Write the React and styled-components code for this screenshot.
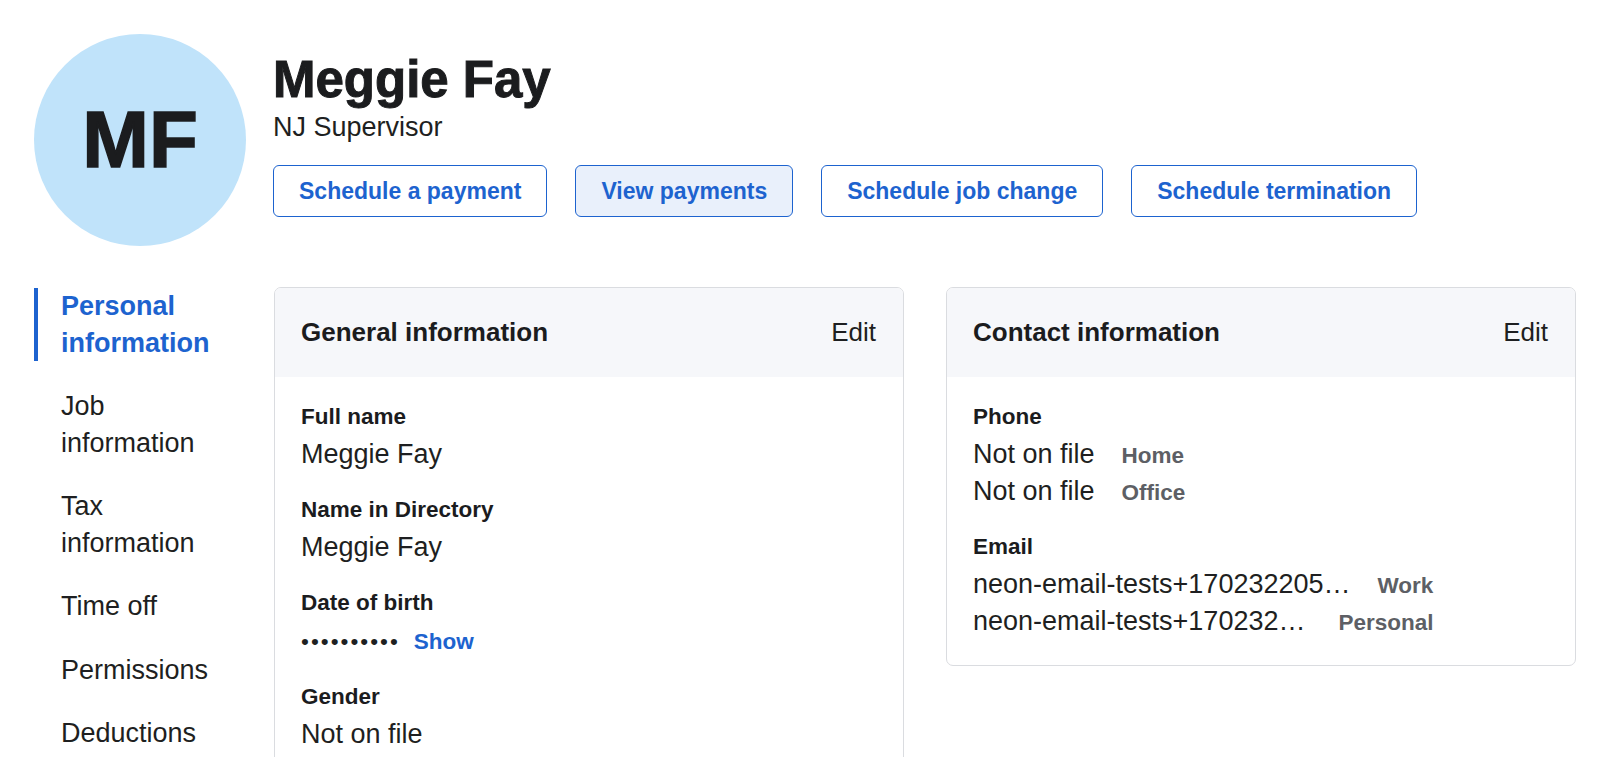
import React from 'react';
import styled, { createGlobalStyle } from 'styled-components';

const GlobalStyle = createGlobalStyle`
  html, body {
    margin: 0;
    padding: 0;
    background: #ffffff;
    overflow: hidden;
  }
  body {
    font-family: "Liberation Sans", Arial, sans-serif;
    color: #1e1f21;
  }
`;

const BLUE = '#1d63cf';

const navItems = [
  'Personal information',
  'Job information',
  'Tax information',
  'Time off',
  'Permissions',
  'Deductions',
];

const actions = [
  { label: 'Schedule a payment' },
  { label: 'View payments', active: true },
  { label: 'Schedule job change' },
  { label: 'Schedule termination' },
];

const App = () => (
  <Page>
    <GlobalStyle />
    <Header>
      <Avatar>MF</Avatar>
      <HeaderInfo>
        <Name>Meggie Fay</Name>
        <Role>NJ Supervisor</Role>
        <ActionRow>
          {actions.map((a) => (
            <ActionButton key={a.label} $active={a.active}>
              {a.label}
            </ActionButton>
          ))}
        </ActionRow>
      </HeaderInfo>
    </Header>

    <Body>
      <Nav>
        {navItems.map((item, i) => (
          <NavItem key={item} $active={i === 0}>
            <NavText>{item}</NavText>
          </NavItem>
        ))}
      </Nav>

      <Cards>
        <Card>
          <CardHeader>
            <CardTitle>General information</CardTitle>
            <EditLink>Edit</EditLink>
          </CardHeader>
          <CardBody $tall>
            <Field>
              <FieldLabel>Full name</FieldLabel>
              <FieldValue>Meggie Fay</FieldValue>
            </Field>
            <Field>
              <FieldLabel>Name in Directory</FieldLabel>
              <FieldValue>Meggie Fay</FieldValue>
            </Field>
            <Field>
              <FieldLabel>Date of birth</FieldLabel>
              <FieldValue>
                <Dots>••••••••••</Dots>
                <ShowLink>Show</ShowLink>
              </FieldValue>
            </Field>
            <Field>
              <FieldLabel>Gender</FieldLabel>
              <FieldValue>Not on file</FieldValue>
            </Field>
          </CardBody>
        </Card>

        <Card>
          <CardHeader>
            <CardTitle>Contact information</CardTitle>
            <EditLink>Edit</EditLink>
          </CardHeader>
          <CardBody>
            <Field>
              <FieldLabel>Phone</FieldLabel>
              <TagRow>
                <FieldValue>Not on file</FieldValue>
                <Tag>Home</Tag>
              </TagRow>
              <TagRow>
                <FieldValue>Not on file</FieldValue>
                <Tag>Office</Tag>
              </TagRow>
            </Field>
            <Field>
              <FieldLabel>Email</FieldLabel>
              <TagRow>
                <FieldValue>neon-email-tests+170232205…</FieldValue>
                <Tag>Work</Tag>
              </TagRow>
              <TagRow>
                <FieldValue>neon-email-tests+170232…</FieldValue>
                <Tag $wide>Personal</Tag>
              </TagRow>
            </Field>
          </CardBody>
        </Card>
      </Cards>
    </Body>
  </Page>
);

export default App;

const Page = styled.div`
  padding: 34px 24px 0 34px;
`;

const Header = styled.header`
  display: flex;
  align-items: flex-start;
  gap: 27px;
`;

const Avatar = styled.div`
  width: 212px;
  height: 212px;
  border-radius: 50%;
  background: #c0e3fa;
  display: flex;
  align-items: center;
  justify-content: center;
  font-size: 80px;
  font-weight: 700;
  color: #1b1c1e;
  -webkit-text-stroke: 1.5px #1b1c1e;
  flex-shrink: 0;
`;

const HeaderInfo = styled.div`
  display: flex;
  flex-direction: column;
  padding-top: 16px;
`;

const Name = styled.h1`
  margin: 0;
  font-size: 51px;
  line-height: 60px;
  font-weight: 700;
  color: #1b1c1e;
  -webkit-text-stroke: 1px #1b1c1e;
`;

const Role = styled.div`
  font-size: 27px;
  line-height: 34px;
  color: #1e1f21;
`;

const ActionRow = styled.div`
  display: flex;
  gap: 28px;
  margin-top: 21px;
`;

const ActionButton = styled.button`
  height: 52px;
  padding: 0 25px;
  border: 1.5px solid ${BLUE};
  border-radius: 6px;
  background: ${(p) => (p.$active ? '#e9f0fb' : '#ffffff')};
  color: ${BLUE};
  font-family: "Liberation Sans", Arial, sans-serif;
  font-size: 23px;
  font-weight: 700;
  cursor: pointer;
`;

const Body = styled.div`
  display: flex;
  align-items: flex-start;
  gap: 28px;
  margin-top: 40px;
`;

const Nav = styled.nav`
  width: 212px;
  flex-shrink: 0;
  display: flex;
  flex-direction: column;
  gap: 27px;
  margin-top: 2px;
`;

const NavItem = styled.div`
  border-left: 4px solid ${(p) => (p.$active ? BLUE : 'transparent')};
  padding-left: 23px;
  font-size: 27px;
  line-height: 36.5px;
  font-weight: ${(p) => (p.$active ? 700 : 400)};
  color: ${(p) => (p.$active ? BLUE : '#1e1f21')};
`;

const NavText = styled.div`
  max-width: 160px;
`;

const Cards = styled.div`
  flex: 1;
  display: grid;
  grid-template-columns: 1fr 1fr;
  gap: 42px;
  align-items: start;
  margin-top: 1px;
`;

const Card = styled.section`
  border: 1.5px solid #dadce0;
  border-radius: 7px;
  overflow: hidden;
`;

const CardHeader = styled.div`
  display: flex;
  align-items: center;
  justify-content: space-between;
  height: 89px;
  padding: 0 27px 0 26px;
  background: #f6f7fa;
`;

const CardTitle = styled.h2`
  margin: 0;
  font-size: 26px;
  font-weight: 700;
  color: #1b1c1e;
`;

const EditLink = styled.span`
  font-size: 26px;
  color: #1e1f21;
  cursor: pointer;
`;

const CardBody = styled.div`
  display: flex;
  flex-direction: column;
  gap: 19px;
  padding: 22px 26px ${(p) => (p.$tall ? '60px' : '25px')};
`;

const Field = styled.div`
  display: flex;
  flex-direction: column;
`;

const FieldLabel = styled.div`
  font-size: 22.5px;
  line-height: 35px;
  font-weight: 700;
  color: #1b1c1e;
  margin-bottom: 2px;
`;

const FieldValue = styled.div`
  font-size: 27px;
  line-height: 37px;
  color: #1e1f21;
  white-space: nowrap;
`;

const TagRow = styled.div`
  display: flex;
  align-items: baseline;
  gap: 27px;
`;

const Tag = styled.span`
  font-size: 22.5px;
  font-weight: 700;
  color: #5d5f65;
  margin-left: ${(p) => (p.$wide ? '6px' : '0')};
`;

const Dots = styled.span`
  font-size: 22.5px;
  letter-spacing: 2px;
`;

const ShowLink = styled.span`
  margin-left: 14px;
  font-size: 22.5px;
  font-weight: 700;
  color: ${BLUE};
  cursor: pointer;
`;
